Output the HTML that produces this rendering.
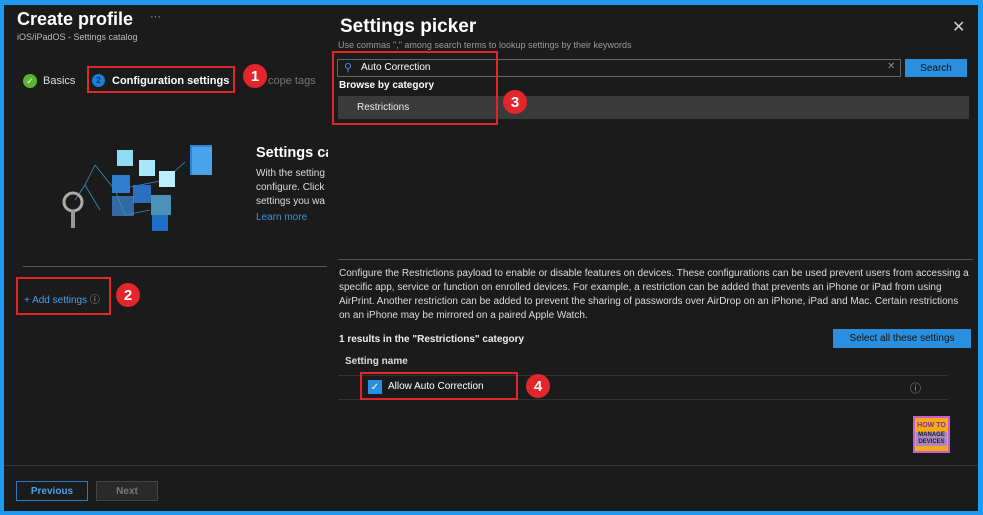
<!DOCTYPE html>
<html><head><meta charset="utf-8"><style>
*{margin:0;padding:0;box-sizing:border-box}
body{width:983px;height:515px;background:#1e9af0;font-family:"Liberation Sans",sans-serif;overflow:hidden;position:relative}
.main{position:absolute;left:4px;top:5px;width:974px;height:506px;background:#1b1b1b}
.a{position:absolute;white-space:nowrap}
.btn{display:flex;align-items:center;justify-content:center}
.red{position:absolute;border:2px solid #e0262a}
.badge{position:absolute;width:24px;height:24px;border-radius:50%;background:#e3262b;color:#fff;font-weight:bold;font-size:15px;display:flex;align-items:center;justify-content:center}
</style></head><body>
<div class="main"></div>
<div class="a" style="left:17px;top:9px;font-size:18px;font-weight:bold;color:#fff">Create profile</div>
<div class="a" style="left:150px;top:11px;font-size:11px;color:#aaa">···</div>
<div class="a" style="left:17px;top:32px;font-size:9px;color:#bbb">iOS/iPadOS - Settings catalog</div>
<div class="a btn" style="left:23px;top:74px;width:14px;height:14px;border-radius:50%;background:#5db233;color:#fff;font-size:9px">✓</div>
<div class="a" style="left:43px;top:75px;font-size:11px;color:#ddd">Basics</div>
<div class="a btn" style="left:92px;top:74px;width:13px;height:13px;border-radius:50%;background:#1c7ed6;color:#111;font-size:8px">2</div>
<div class="a" style="left:112px;top:75px;font-size:11px;font-weight:bold;color:#fff">Configuration settings</div>
<div class="red" style="left:87px;top:66px;width:148px;height:27px"></div>
<div class="badge" style="left:243px;top:64px">1</div>
<div class="a" style="left:268px;top:75px;font-size:11px;color:#777">cope tags</div>
<svg class="a" style="left:55px;top:140px" width="165" height="95" viewBox="0 0 165 95">
<g stroke="#3a8fc8" stroke-width="0.8" fill="none"><path d="M40 25 L60 50 L85 45 L110 40 L130 22 M40 25 L30 45 L45 70 M60 50 L70 75 L95 70 M30 45 L20 60"/></g>
<rect x="62" y="10" width="16" height="16" fill="#8fdcf5"/><rect x="84" y="20" width="16" height="16" fill="#a8e6f8"/><rect x="104" y="31" width="16" height="16" fill="#bdeefb"/>
<rect x="57" y="35" width="18" height="18" fill="#2f7fd0"/><rect x="78" y="45" width="18" height="18" fill="#2a6fc0"/><rect x="57" y="56" width="22" height="20" fill="#3b8bd8" opacity=".7"/>
<rect x="96" y="55" width="20" height="20" fill="#5aaee0" opacity=".8"/><rect x="97" y="75" width="16" height="16" fill="#1f6fc8"/>
<rect x="135" y="5" width="22" height="30" fill="#2d86d8"/><rect x="137" y="7" width="20" height="28" fill="#4aa3e8"/>
<circle cx="18" cy="62" r="9" fill="none" stroke="#aaa" stroke-width="3"/><rect x="16" y="70" width="4" height="18" fill="#999"/>
</svg>
<div class="a" style="left:256px;top:145px;font-size:14.5px;font-weight:bold;color:#fff;width:72px;overflow:hidden">Settings ca</div>
<div class="a" style="left:256px;top:167px;font-size:10px;line-height:14px;color:#ddd;width:72px;overflow:hidden">With the setting<br>configure. Click<br>settings you wa</div>
<div class="a" style="left:256px;top:212px;font-size:10px;color:#3a8fd8">Learn more</div>
<div class="a" style="left:23px;top:266px;width:304px;height:1px;background:#555"></div>
<div class="a" style="left:24px;top:291px;font-size:10px;color:#4aa0e8">+ Add settings <span style="color:#aaa">ⓘ</span></div>
<div class="red" style="left:16px;top:277px;width:95px;height:38px"></div>
<div class="badge" style="left:116px;top:283px">2</div>
<div class="a" style="left:4px;top:465px;width:974px;height:1px;background:#333"></div>
<div class="a btn" style="left:16px;top:481px;width:72px;height:20px;border:1px solid #2a7ac0;color:#4aa0e8;font-size:10px;font-weight:bold">Previous</div>
<div class="a btn" style="left:96px;top:481px;width:62px;height:20px;border:1px solid #444;background:#2a2a2a;color:#777;font-size:10px;font-weight:bold">Next</div>
<div class="a" style="left:340px;top:16px;font-size:19px;font-weight:bold;color:#fff">Settings picker</div>
<div class="a" style="left:952px;top:17px;font-size:16px;color:#ccc">✕</div>
<div class="a" style="left:338px;top:40px;font-size:9px;color:#999">Use commas "," among search terms to lookup settings by their keywords</div>
<div class="a" style="left:337px;top:59px;width:564px;height:18px;border:1px solid #666;background:#1b1b1b"></div>
<div class="a" style="left:344px;top:61px;font-size:11px;color:#3a8fd8">⚲</div>
<div class="a" style="left:361px;top:62px;font-size:10px;color:#fff">Auto Correction</div>
<div class="a" style="left:887px;top:61px;font-size:10px;color:#888">✕</div>
<div class="a btn" style="left:905px;top:59px;width:62px;height:18px;background:#2b8fe0;color:#111;font-size:10px">Search</div>
<div class="a" style="left:339px;top:80px;font-size:10px;font-weight:bold;color:#fff">Browse by category</div>
<div class="a" style="left:338px;top:96px;width:631px;height:23px;background:#3a3a3a"></div>
<div class="a" style="left:357px;top:102px;font-size:10px;color:#eee">Restrictions</div>
<div class="red" style="left:332px;top:51px;width:166px;height:74px"></div>
<div class="badge" style="left:503px;top:90px">3</div>
<div class="a" style="left:338px;top:259px;width:635px;height:1px;background:#555"></div>
<div class="a" style="left:339px;top:267px;font-size:10px;line-height:14px;color:#ddd">Configure the Restrictions payload to enable or disable features on devices. These configurations can be used prevent users from accessing a<br>specific app, service or function on enrolled devices. For example, a restriction can be added that prevents an iPhone or iPad from using<br>AirPrint. Another restriction can be added to prevent the sharing of passwords over AirDrop on an iPhone, iPad and Mac. Certain restrictions<br>on an iPhone may be mirrored on a paired Apple Watch.</div>
<div class="a" style="left:339px;top:334px;font-size:10px;font-weight:bold;color:#eee">1 results in the "Restrictions" category</div>
<div class="a btn" style="left:833px;top:329px;width:138px;height:19px;background:#2b8fe0;color:#111;font-size:10px">Select all these settings</div>
<div class="a" style="left:345px;top:356px;font-size:10px;font-weight:bold;color:#ddd">Setting name</div>
<div class="a" style="left:338px;top:375px;width:610px;height:1px;background:#333"></div>
<div class="a" style="left:338px;top:399px;width:610px;height:1px;background:#333"></div>
<div class="a btn" style="left:368px;top:380px;width:14px;height:14px;background:#2b8fe0;color:#fff;font-size:10px">✓</div>
<div class="a" style="left:388px;top:381px;font-size:10px;color:#fff">Allow Auto Correction</div>
<div class="red" style="left:360px;top:372px;width:158px;height:28px"></div>
<div class="badge" style="left:526px;top:374px">4</div>
<div class="a" style="left:910px;top:380px;font-size:11px;color:#999">ⓘ</div>
<div class="a" style="left:913px;top:416px;width:37px;height:37px;background:#c85ec8;padding:2px">
<div style="background:#f7a91c;width:33px;height:33px;text-align:center;font-size:7px;font-weight:bold;color:#7a2fa0;line-height:9px;padding-top:3px">HOW TO<div style="background:#a888c0;color:#222;font-size:6px;line-height:7px;margin:2px 1px 0">MANAGE<br>DEVICES</div></div></div>
</body></html>
